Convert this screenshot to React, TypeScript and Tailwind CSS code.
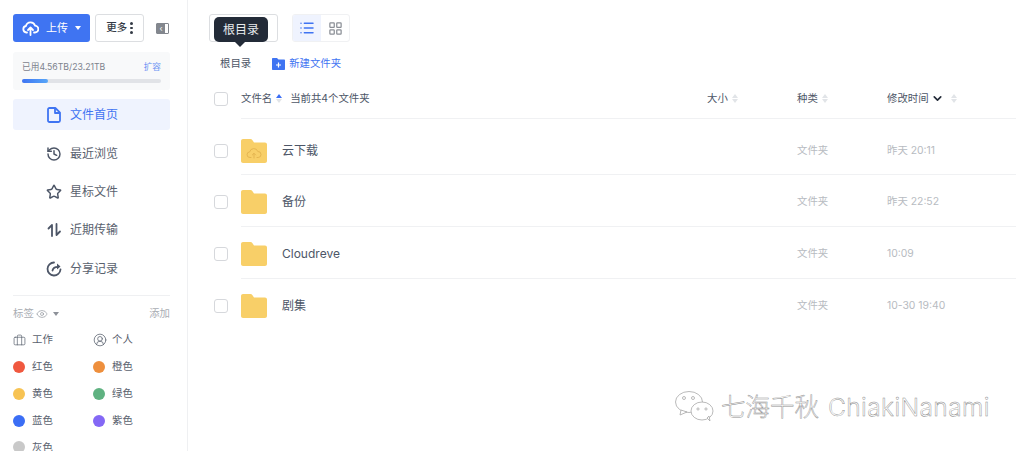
import React from "react";
import { History, Star, Eye, Briefcase, CircleUserRound, ChevronDown, List, LayoutGrid } from "lucide-react";

const NAV = [
  { label: "最近浏览", icon: "history" },
  { label: "星标文件", icon: "star" },
  { label: "近期传输", icon: "transfer" },
  { label: "分享记录", icon: "share" },
];

const COLORS = [
  { label: "红色", dot: "bg-[#f0583f]" },
  { label: "橙色", dot: "bg-[#ee8f3d]" },
  { label: "黄色", dot: "bg-[#f7c353]" },
  { label: "绿色", dot: "bg-[#5fb281]" },
  { label: "蓝色", dot: "bg-[#3b6ef5]" },
  { label: "紫色", dot: "bg-[#8468f5]" },
  { label: "灰色", dot: "bg-[#c9c9c9]" },
];

const FILES = [
  { name: "云下载", time: "昨天 20:11", cloud: true },
  { name: "备份", time: "昨天 22:52" },
  { name: "Cloudreve", time: "10:09" },
  { name: "剧集", time: "10-30 19:40", last: true },
];

const NavIcon = ({ icon }: { icon: string }) => {
  if (icon === "history") return <History size={16} strokeWidth={2.2} className="text-[#4d5667]" />;
  if (icon === "star") return <Star size={16} strokeWidth={2.2} className="text-[#4d5667]" />;
  if (icon === "transfer") {
    return (
      <svg width="16" height="16" viewBox="0 0 16 16" fill="none" stroke="#4d5667" strokeWidth="1.8" strokeLinecap="round" strokeLinejoin="round">
        <path d="M6 14V3L2.5 6.5" />
        <path d="M10.500 2v11L14 9.500" />
      </svg>
    );
  }
  return (
    <svg width="16" height="16" viewBox="0 0 16 16" fill="none" stroke="#4d5667" strokeWidth="1.8" strokeLinecap="round">
      <path d="M8 1.500A6.500 6.500 0 1 0 14.500 8.500" />
      <path d="M6.500 9.500C7 7 9 5.800 12 5.800" />
      <path d="M11 2.500l3.500 3-3.500 3z" fill="#4d5667" stroke="none" />
    </svg>
  );
};

const SortArrows = ({ active }: { active?: boolean }) => (
  <span className="flex flex-col gap-[1px]">
    <span className={`h-0 w-0 border-x-[3px] border-b-[4px] border-x-transparent ${active ? "border-b-[#3b6ef5]" : "border-b-[#e1e4e8]"}`} />
    <span className="h-0 w-0 border-x-[3px] border-t-[4px] border-x-transparent border-t-[#e1e4e8]" />
  </span>
);

const Checkbox = () => <span className="h-[14px] w-[14px] shrink-0 rounded-[3px] border border-[#d6d8dc] bg-white" />;

const Folder = ({ cloud }: { cloud?: boolean }) => (
  <svg width="26" height="24" viewBox="0 0 26 24" className="shrink-0">
    <path d="M2 0h7.500c.8 0 1.300.4 1.800 1l1.700 2.500h11c1.100 0 2 .9 2 2V22c0 1.100-.9 2-2 2H2c-1.100 0-2-.9-2-2V2C0 .9.9 0 2 0z" fill="#f8cf68" />
    {cloud && (
      <g fill="none" stroke="#e2b24e" strokeWidth="0.900" strokeLinecap="round" strokeLinejoin="round">
        <path d="M10 18.500H9a2.800 2.800 0 0 1-.3-5.600 4.200 4.200 0 0 1 8.100-.4 3 3 0 0 1 .4 6H16" />
        <path d="M13 19v-4.500M11.300 16l1.700-1.700 1.700 1.700" />
      </g>
    )}
  </svg>
);

const Sidebar = () => (
  <aside className="h-[451px] w-[188px] shrink-0 overflow-hidden border-r border-[#eff0f2] pl-[13px] pr-[17px] pt-[14px]">
    <div className="flex items-center">
      <button className="flex h-[28px] w-[77px] items-center justify-center gap-[7px] rounded-[3px] bg-[#3f74f2] text-[11px] text-white">
        <svg width="17" height="15" viewBox="0 0 17 15" fill="none" stroke="white" strokeWidth="1.800" strokeLinecap="round" strokeLinejoin="round">
          <path d="M5 11.500H4.300A3.300 3.300 0 0 1 3.900 5a4.800 4.800 0 0 1 9.200-.300A3.400 3.400 0 0 1 12.800 11.500H12" />
          <path d="M8.500 14V7M6 9l2.500-2.500L11 9" />
        </svg>
        <span>上传</span>
        <span className="h-0 w-0 border-x-[3.500px] border-t-[4px] border-x-transparent border-t-white" />
      </button>
      <button className="ml-[5px] flex h-[28px] w-[49px] items-center justify-center gap-[3px] rounded-[3px] border border-[#dcdee1] text-[10.500px] font-medium text-[#333a45]">
        <span>更多</span>
        <span className="flex flex-col gap-[2px]">
          <span className="h-[2.500px] w-[2.500px] rounded-full bg-[#333a45]" />
          <span className="h-[2.500px] w-[2.500px] rounded-full bg-[#333a45]" />
          <span className="h-[2.500px] w-[2.500px] rounded-full bg-[#333a45]" />
        </span>
      </button>
      <span className="ml-[12px] flex h-[11px] w-[13px] overflow-hidden rounded-[1px] border border-[#83878e]">
        <span className="flex w-[8px] items-center justify-center bg-[#83878e] text-[8px] leading-none text-white">‹</span>
      </span>
    </div>

    <div className="mt-[10px] h-[38px] rounded-[3px] bg-[#f8f9fa] px-[9px] pt-[9px]">
      <div className="flex items-center justify-between text-[8.700px] leading-[12px]">
        <span className="text-[#7d838d]">已用4.56TB/23.21TB</span>
        <span className="text-[#6f96f3]">扩容</span>
      </div>
      <div className="mt-[6px] h-[4px] rounded-full bg-[#e1e3e7]">
        <div className="h-full w-[19%] rounded-full bg-gradient-to-r from-[#3f74f2] to-[#58a6f8]" />
      </div>
    </div>

    <div className="mt-[9px] flex h-[31px] items-center gap-[9px] rounded-[3px] bg-[#eff3fe] pl-[34px] pt-[1px] text-[12px] text-[#3f74f2]">
      <svg width="14" height="16" viewBox="0 0 14 16" fill="none" stroke="#3f74f2" strokeWidth="1.800" strokeLinejoin="round">
        <path d="M2.500 1h5.800L13 5.700V13.500c0 .8-.7 1.500-1.500 1.500h-9C1.700 15 1 14.300 1 13.500v-11C1 1.700 1.700 1 2.500 1z" />
        <path d="M8 1v5h5" />
      </svg>
      <span>文件首页</span>
    </div>

    <div className="mt-[4.500px]">
      {NAV.map((item) => (
        <div key={item.label} className="flex h-[38.300px] items-center gap-[8px] pl-[33px] text-[12px] text-[#59616e]">
          <NavIcon icon={item.icon} />
          <span>{item.label}</span>
        </div>
      ))}
    </div>

    <div className="mt-[7px] border-t border-[#eff0f2]" />

    <div className="mt-[11px] flex h-[14px] items-center text-[10.400px] text-[#a9adb3]">
      <span>标签</span>
      <Eye size={12} strokeWidth={1.300} className="ml-[2px] text-[#8d9199]" />
      <span className="ml-[5px] h-0 w-0 border-x-[3px] border-t-[4px] border-x-transparent border-t-[#8d9199]" />
      <span className="ml-auto">添加</span>
    </div>

    <div className="mt-[13px] grid grid-cols-[80px_80px] auto-rows-[26.800px] text-[10.400px] text-[#59616e]">
      <div className="flex h-[13px] items-center gap-[6px]">
        <Briefcase size={13} strokeWidth={1.300} className="text-[#59616e]" />
        <span>工作</span>
      </div>
      <div className="flex h-[13px] items-center gap-[5px]">
        <CircleUserRound size={14} strokeWidth={1.300} className="text-[#59616e]" />
        <span>个人</span>
      </div>
      {COLORS.map((c) => (
        <div key={c.label} className="flex h-[13px] items-center gap-[7px]">
          <span className={`h-[12px] w-[12px] rounded-full ${c.dot}`} />
          <span>{c.label}</span>
        </div>
      ))}
    </div>
  </aside>
);

const Main = () => (
  <main className="relative min-w-0 flex-1 pl-[21px] pr-[8px] pt-[14px]">
    <div className="flex h-[28px] items-center">
      <div className="h-[28px] w-[69px] rounded-[3px] border border-[#dcdee1]" />
      <div className="ml-[14px] flex h-[28px] w-[58px] overflow-hidden rounded-[3px] border border-[#f0f1f3]">
        <span className="flex w-[29px] items-center justify-center bg-[#eff3fe]">
          <List size={16} strokeWidth={2.2} className="text-[#3f74f2]" />
        </span>
        <span className="flex w-[29px] items-center justify-center">
          <LayoutGrid size={15} strokeWidth={2} className="text-[#8b8f96]" />
        </span>
      </div>
    </div>

    {/* tooltip sits over the path box */}
    <div className="absolute left-[26px] top-[17px] flex h-[25px] w-[54px] items-center justify-center rounded-[5px] bg-[#232b38] text-[12px] text-[#e8eaed]">
      根目录
      <span className="absolute left-[21px] top-[25px] h-0 w-0 border-x-[5px] border-t-[5px] border-x-transparent border-t-[#232b38]" />
    </div>

    <div className="mt-[14px] flex h-[14px] items-center pl-[11px] pt-[1px] text-[10.400px]">
      <span className="text-[#4d5667]">根目录</span>
      <svg width="13" height="12" viewBox="0 0 13 12" className="ml-[21px]">
        <path d="M1 0h4l1.500 1.500H12c.6 0 1 .4 1 1V11c0 .6-.4 1-1 1H1c-.6 0-1-.4-1-1V1c0-.6.4-1 1-1z" fill="#3f74f2" />
        <path d="M6.500 4.500v5M4 7h5" stroke="white" strokeWidth="1.200" />
      </svg>
      <span className="ml-[4px] text-[#3f74f2]">新建文件夹</span>
    </div>

    <div className="mt-[14px] flex h-[34px] items-center pb-[5px] pl-[5px] text-[10.400px] text-[#4d5667]">
      <Checkbox />
      <span className="ml-[13px]">文件名</span>
      <span className="ml-[4px]"><SortArrows active /></span>
      <span className="ml-[8px]">当前共4个文件夹</span>
      <div className="ml-auto flex w-[309px] items-center">
        <div className="flex w-[90px] items-center gap-[4px]">
          <span>大小</span>
          <SortArrows />
        </div>
        <div className="flex w-[90px] items-center gap-[4px]">
          <span>种类</span>
          <SortArrows />
        </div>
        <div className="flex items-center">
          <span>修改时间</span>
          <ChevronDown size={13} strokeWidth={3} className="ml-[2px] text-[#232b38]" />
          <span className="ml-[7px]"><SortArrows /></span>
        </div>
      </div>
    </div>

    <div className="ml-[32px] border-t border-[#f0f1f3]" />

    <div className="mt-[4px]">
      {FILES.map((file, i) => (
        <div key={file.name} className="flex h-[52px] items-stretch pl-[5px]">
          <div className={`flex items-center ${i === 0 ? "pt-[4px]" : "pt-[1px]"}`}>
            <Checkbox />
          </div>
          <div className={`ml-[13px] flex min-w-0 flex-1 items-center ${i === 0 ? "pt-[5px]" : "pt-[2px]"} ${file.last ? "" : "border-b border-[#f0f1f3]"}`}>
            <Folder cloud={file.cloud} />
            <span className="ml-[15px] text-[12px] text-[#4d5667]">{file.name}</span>
            <div className="ml-auto flex w-[219px] items-center text-[10.400px] text-[#b7bbc1]">
              <span className="w-[90px]">文件夹</span>
              <span>{file.time}</span>
            </div>
          </div>
        </div>
      ))}
    </div>

    {/* watermark laid over the page */}
    <div className="absolute left-[487px] top-[391px] flex items-center text-[24.500px] leading-[28px] text-white [-webkit-text-stroke:0.45px_#8e8e8e]">
      <svg width="39" height="31" viewBox="0 0 39 31" fill="white" stroke="#a8a8a8" strokeWidth="0.800">
        <ellipse cx="14" cy="11" rx="13.500" ry="10.500" />
        <path d="M6 19l-1 5 7-3z" />
        <ellipse cx="27" cy="20" rx="11" ry="9" />
        <path d="M32 27l3 3-1-5z" />
        <circle cx="9" cy="7" r="1.500" />
        <circle cx="18" cy="7" r="1.500" />
        <circle cx="23" cy="18" r="1.100" />
        <circle cx="31" cy="18" r="1.100" />
      </svg>
      <span className="ml-[7px] font-light">七海千秋</span>
      <span className="ml-[9px] font-light tracking-[0.4px]">ChiakiNanami</span>
    </div>
  </main>
);

export default function App() {
  return (
    <div className="flex h-[451px] w-[1024px] overflow-hidden bg-white font-['Inter','Noto_Sans_CJK_SC',sans-serif]">
      <Sidebar />
      <Main />
    </div>
  );
}
